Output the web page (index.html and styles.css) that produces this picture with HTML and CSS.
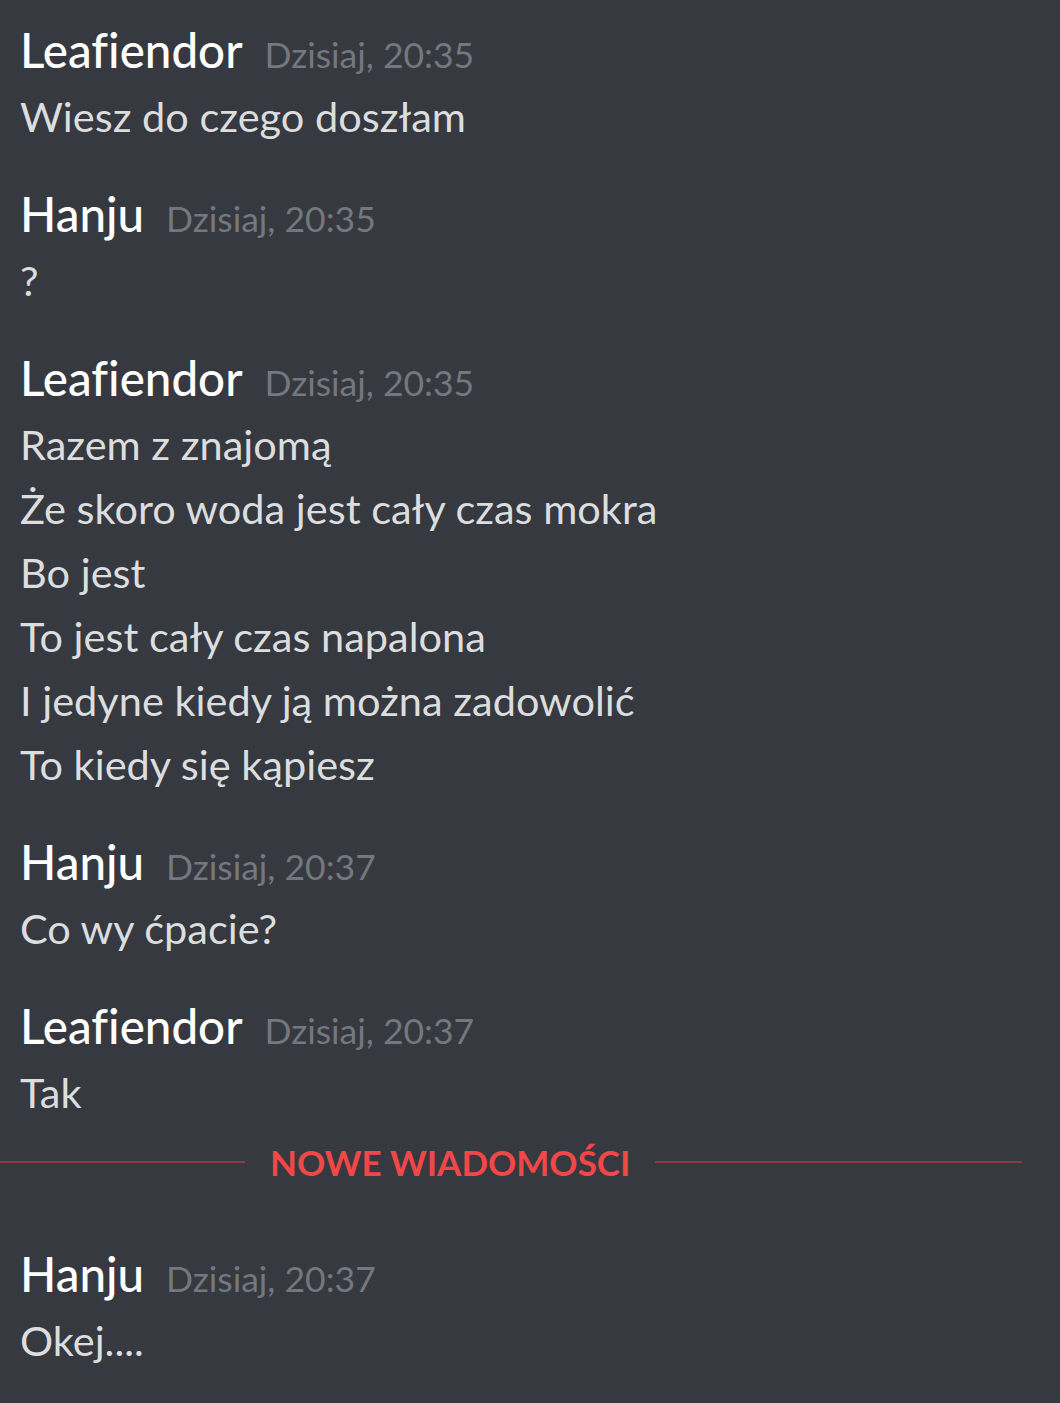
FILE: index.html
```html
<!DOCTYPE html>
<html lang="pl">
<head>
    <meta charset="UTF-8">
    <meta name="viewport" content="width=device-width, initial-scale=1.0">
    <title>Czat</title>
    <link rel="stylesheet" href="styles.css">
</head>
<body>
    <div class="chat">
        <div class="group">
            <div class="header">
                <span class="name">Leafiendor</span>
                <span class="time">Dzisiaj, 20:35</span>
            </div>
            <div class="line">Wiesz do czego doszłam</div>
        </div>

        <div class="group">
            <div class="header">
                <span class="name">Hanju</span>
                <span class="time">Dzisiaj, 20:35</span>
            </div>
            <div class="line">?</div>
        </div>

        <div class="group">
            <div class="header">
                <span class="name">Leafiendor</span>
                <span class="time">Dzisiaj, 20:35</span>
            </div>
            <div class="line">Razem z znajomą</div>
            <div class="line">Że skoro woda jest cały czas mokra</div>
            <div class="line">Bo jest</div>
            <div class="line">To jest cały czas napalona</div>
            <div class="line">I jedyne kiedy ją można zadowolić</div>
            <div class="line">To kiedy się kąpiesz</div>
        </div>

        <div class="group">
            <div class="header">
                <span class="name">Hanju</span>
                <span class="time">Dzisiaj, 20:37</span>
            </div>
            <div class="line">Co wy ćpacie?</div>
        </div>

        <div class="group">
            <div class="header">
                <span class="name">Leafiendor</span>
                <span class="time">Dzisiaj, 20:37</span>
            </div>
            <div class="line">Tak</div>
        </div>

        <!-- nowe wiadomości -->
        <div class="divider">
            <span class="divider-rule left"></span>
            <span class="divider-text">NOWE WIADOMOŚCI</span>
            <span class="divider-rule right"></span>
        </div>

        <div class="group after-divider">
            <div class="header">
                <span class="name">Hanju</span>
                <span class="time">Dzisiaj, 20:37</span>
            </div>
            <div class="line">Okej....</div>
        </div>
    </div>
</body>
</html>
```

FILE: styles.css
```css
body {
    margin: 0;
    padding: 0;
    background-color: #36393f;
    color: #dcddde;
    font-family: Lato, "Open Sans", sans-serif;
    font-variant-ligatures: none;
}
.chat {
    padding-top: 16px;
}
.group {
    padding-left: 20px;
    margin-bottom: 32px;
}
.header {
    display: flex;
    align-items: baseline;
    gap: 22px;
    height: 68px;
    line-height: 68px;
}
.name {
    color: #ffffff;
    font-size: 47.5px;
    font-weight: 500;
}
.time {
    color: #74777e;
    font-size: 35.5px;
}
.line {
    font-size: 41.5px;
    line-height: 64px;
}
.divider {
    display: flex;
    align-items: center;
    height: 40px;
    margin-top: -14px;
    margin-right: 38px;
}
.divider-rule {
    height: 2px;
    background-color: #8c3b40;
}
.divider-rule.left {
    width: 245px;
}
.divider-rule.right {
    flex: 1;
}
.divider-text {
    padding: 0 25px;
    color: #f04747;
    font-size: 35px;
    font-weight: bold;
}
.after-divider {
    margin-top: 58px;
}
```
